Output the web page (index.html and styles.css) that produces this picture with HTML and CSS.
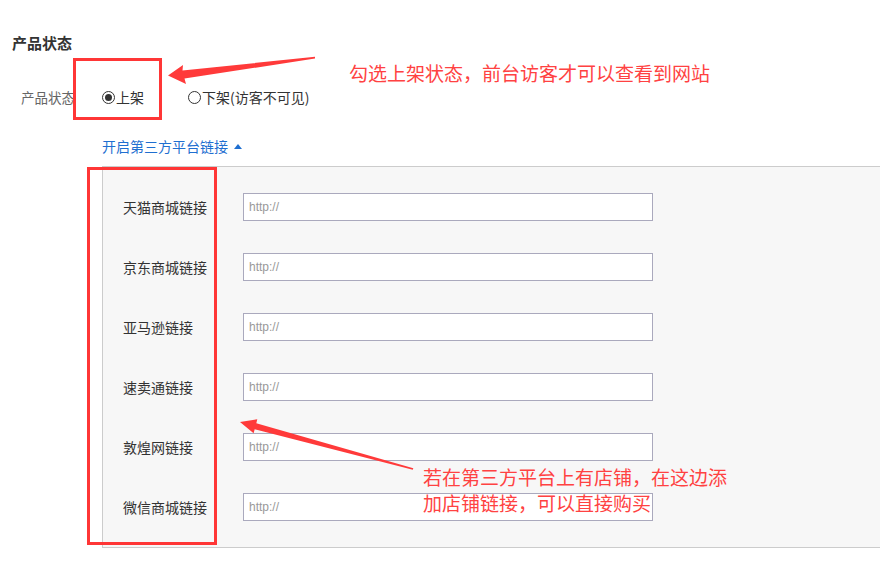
FILE: index.html
```html
<!DOCTYPE html>
<html lang="zh-CN">
<head>
<meta charset="utf-8">
<title>产品状态</title>
<link rel="stylesheet" href="styles.css">
</head>
<body>
<div class="page">
  <h2 class="title">产品状态</h2>
  <div class="status-row">
    <span class="status-label">产品状态</span>
    <label class="radio"><span class="dot checked"></span>上架</label>
    <label class="radio"><span class="dot"></span>下架(访客不可见)</label>
  </div>
  <div class="toggle-row">
    <a class="toggle">开启第三方平台链接<span class="caret"></span></a>
  </div>
  <div class="panel">
    <div class="field"><span class="field-label">天猫商城链接</span><span class="input">http://</span></div>
    <div class="field"><span class="field-label">京东商城链接</span><span class="input">http://</span></div>
    <div class="field"><span class="field-label">亚马逊链接</span><span class="input">http://</span></div>
    <div class="field"><span class="field-label">速卖通链接</span><span class="input">http://</span></div>
    <div class="field"><span class="field-label">敦煌网链接</span><span class="input">http://</span></div>
    <div class="field"><span class="field-label">微信商城链接</span><span class="input">http://</span></div>
  </div>

  <div class="mark mark-radio"></div>
  <div class="mark mark-labels"></div>
  <p class="note note-top">勾选上架状态，前台访客才可以查看到网站</p>
  <p class="note note-bottom">若在第三方平台上有店铺，在这边添<br>加店铺链接，可以直接购买</p>
  <svg class="arrows" width="880" height="575" viewBox="0 0 880 575">
    <polygon fill="#ff3a3a" points="168,75.5 183,65 182.5,70.5 315,56.8 315,58.6 184.5,78.5 186,84"/>
    <polygon fill="#ff3a3a" points="240,422 257.3,419.2 256.3,423.3 413.3,468.3 412.8,469.8 254.7,429.2 253.6,433.3"/>
  </svg>
</div>
</body>
</html>
```
FILE: styles.css
```css
* { box-sizing: border-box; }
html, body { margin: 0; padding: 0; background: #fff; }
body {
  font-family: "Noto Sans CJK SC", "Liberation Sans", sans-serif;
  color: #333;
  font-size: 14px;
}
.page {
  position: relative;
  width: 880px;
  height: 575px;
  overflow: hidden;
}
.title {
  margin: 0;
  padding: 33px 0 0 12px;
  font-size: 15px;
  line-height: 20px;
  font-weight: bold;
  color: #333;
}
.status-row {
  margin-top: 30px;
  height: 28px;
  display: flex;
  align-items: center;
  padding-left: 21px;
}
.status-label {
  width: 81px;
  color: #666;
  font-size: 13.5px;
}
.radio {
  display: flex;
  align-items: center;
  color: #333;
  font-size: 14px;
}
.radio + .radio { margin-left: 44px; }
.dot {
  width: 13px;
  height: 13px;
  border: 1px solid #333;
  border-radius: 50%;
  margin-right: 1px;
  display: flex;
  align-items: center;
  justify-content: center;
}
.dot.checked::after {
  content: "";
  width: 7px;
  height: 7px;
  border-radius: 50%;
  background: #333;
}
.toggle-row {
  margin-top: 25px;
  padding-left: 102px;
  line-height: 20px;
}
.toggle {
  color: #1f6fd0;
  font-size: 14px;
  display: inline-flex;
  align-items: center;
}
.caret {
  width: 0;
  height: 0;
  border-left: 4.5px solid transparent;
  border-right: 4.5px solid transparent;
  border-bottom: 5px solid #1f6fd0;
  margin-left: 6px;
}
.panel {
  margin: 10px 0 0 102px;
  background: #f7f7f7;
  border: 1px solid #ccc;
  border-right: none;
  padding: 26px 0 26px 20px;
  display: flex;
  flex-direction: column;
  gap: 32px;
}
.field {
  display: flex;
  align-items: center;
  height: 28px;
}
.field-label {
  width: 120px;
  color: #333;
  font-size: 14px;
}
.input {
  width: 410px;
  height: 28px;
  background: #fff;
  border: 1px solid #aaa9bd;
  padding-left: 5px;
  display: flex;
  align-items: center;
  font-family: "Liberation Sans", sans-serif;
  font-size: 12px;
  color: #999;
}
.mark {
  position: absolute;
  border: 3px solid #ff3636;
}
.mark-radio { left: 73px; top: 58px; width: 89px; height: 62px; }
.mark-labels { left: 87px; top: 167px; width: 130px; height: 378px; }
.note {
  position: absolute;
  margin: 0;
  color: #ff4242;
  font-size: 19px;
  line-height: 26px;
}
.note-top { left: 349px; top: 60px; }
.note-bottom { left: 423px; top: 464px; }
.arrows { position: absolute; left: 0; top: 0; pointer-events: none; }
```
